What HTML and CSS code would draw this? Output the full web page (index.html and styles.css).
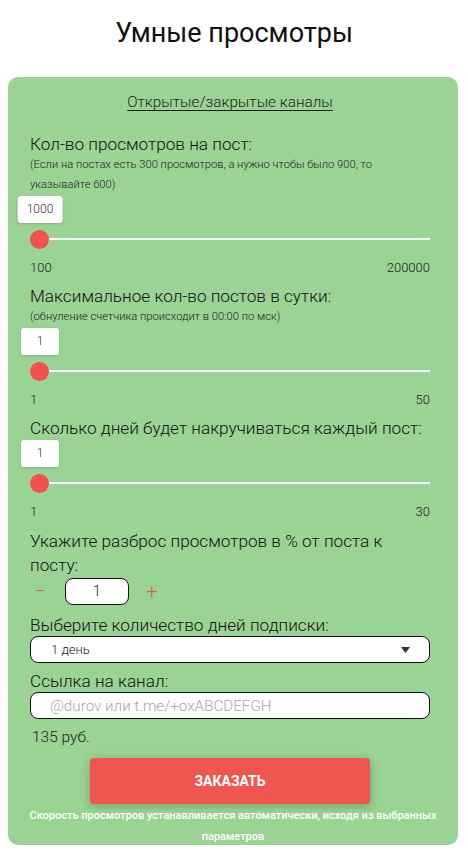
FILE: index.html
```html
<!DOCTYPE html>
<html lang="ru">
<head>
<meta charset="utf-8">
<title>Умные просмотры</title>
<link rel="stylesheet" href="styles.css">
</head>
<body>
<h1 class="title">Умные просмотры</h1>
<div class="card">
  <a class="link" href="#">Открытые/закрытые каналы</a>

  <div class="label first">Кол-во просмотров на пост:</div>
  <div class="hint">(Если на постах есть 300 просмотров, а нужно чтобы было 900, то указывайте 600)</div>
  <div class="slider">
    <div class="bubble">1000</div>
    <div class="track"><span class="thumb"></span><span class="line"></span></div>
  </div>
  <div class="range"><span>100</span><span>200000</span></div>

  <div class="label">Максимальное кол-во постов в сутки:</div>
  <div class="hint">(обнуление счетчика происходит в 00:00 по мск)</div>
  <div class="slider">
    <div class="bubble">1</div>
    <div class="track"><span class="thumb"></span><span class="line"></span></div>
  </div>
  <div class="range"><span>1</span><span>50</span></div>

  <div class="label">Сколько дней будет накручиваться каждый пост:</div>
  <div class="slider">
    <div class="bubble">1</div>
    <div class="track"><span class="thumb"></span><span class="line"></span></div>
  </div>
  <div class="range"><span>1</span><span>30</span></div>

  <div class="label two">Укажите разброс просмотров в % от поста к посту:</div>
  <div class="stepper">
    <span class="sign minus">−</span>
    <div class="num">1</div>
    <span class="sign plus">+</span>
  </div>

  <div class="label l5">Выберите количество дней подписки:</div>
  <div class="select">
    <span>1 день</span>
    <svg class="arrow" width="9" height="6" viewBox="0 0 9 6"><path d="M0 0H9L4.5 6Z" fill="#333"/></svg>
  </div>

  <div class="label l6">Ссылка на канал:</div>
  <input class="field" type="text" placeholder="@durov или t.me/+oxABCDEFGH">

  <div class="price">135 руб.</div>
  <div class="btnrow"><button class="order">ЗАКАЗАТЬ</button></div>
  <p class="foot">Скорость просмотров устанавливается автоматически, исходя из выбранных параметров</p>
</div>
</body>
</html>
```
FILE: styles.css
```css
* { box-sizing: border-box; }
html, body { margin: 0; padding: 0; background: #fff; }
body {
  width: 468px;
  font-family: Roboto, "Noto Sans", sans-serif;
  color: #1b1b1b;
}
.title {
  margin: 0;
  padding-top: 13px;
  height: 77px;
  font-size: 27px;
  line-height: 40px;
  font-weight: 400;
  text-align: center;
  color: #111;
}
.card {
  width: 450px;
  margin-left: 8px;
  background: #9bd394;
  border-radius: 10px;
  padding: 14px 28px 0 22px;
  height: 768px;
}
.link {
  display: block;
  text-align: center;
  font-size: 15.3px;
  line-height: 22px;
  color: #222;
  text-decoration: underline;
  text-underline-offset: 3px;
  text-decoration-thickness: 1px;
  font-weight: 300;
}
.label {
  margin-top: 9px;
  font-size: 17.2px;
  line-height: 22px;
  font-weight: 300;
  color: #111;
}
.label.first { margin-top: 20px; }
.label.two { line-height: 24px; padding-right: 20px; }
.label.l6 { margin-top: 7px; }
.hint {
  font-size: 11.2px;
  line-height: 20px;
  font-weight: 300;
  color: #222;
  padding-right: 40px;
}
.slider {
  position: relative;
  padding-top: 35px;
}
.bubble {
  position: absolute;
  top: 1px;
  left: 10px;
  transform: translateX(-50%);
  min-width: 38px;
  height: 27px;
  padding: 0 9px;
  background: #fff;
  border-radius: 3px;
  box-shadow: 0 1px 3px rgba(0,0,0,0.15);
  font-size: 12px;
  line-height: 27px;
  text-align: center;
  color: #333;
  font-weight: 300;
}
.track {
  display: flex;
  align-items: center;
  height: 18px;
}
.thumb {
  flex: none;
  width: 19px;
  height: 19px;
  border-radius: 50%;
  background: #ef5350;
}
.line {
  flex: 1;
  height: 2px;
  background: #fff;
}
.range {
  display: flex;
  justify-content: space-between;
  margin-top: 12px;
  font-size: 13px;
  line-height: 16px;
  font-weight: 300;
  color: #222;
}
.stepper {
  display: flex;
  align-items: center;
  margin-top: 1px;
  height: 27px;
}
.sign {
  color: #e0584c;
  font-size: 20px;
  font-weight: 300;
  text-align: center;
  line-height: 27px;
}
.sign.minus { width: 20px; margin-right: 15px; }
.sign.plus { width: 20px; margin-left: 13px; }
.num {
  width: 64px;
  height: 27px;
  border: 1px solid #111;
  border-radius: 8px;
  background: #fff;
  text-align: center;
  font-size: 14px;
  line-height: 25px;
  font-weight: 300;
}
.select {
  display: flex;
  align-items: center;
  justify-content: space-between;
  height: 27px;
  border: 1px solid #111;
  border-radius: 8px;
  background: #fff;
  padding: 0 19px 0 20px;
  font-size: 13px;
  font-weight: 300;
  color: #222;
}
.field {
  display: block;
  width: 100%;
  height: 27px;
  border: 1px solid #111;
  border-radius: 8px;
  background: #fff;
  padding: 0 19px;
  font-family: inherit;
  font-size: 15.2px;
  font-weight: 300;
  outline: none;
}
.field::placeholder { color: #a8a8a8; }
.price {
  margin-top: 8px;
  font-size: 15.5px;
  line-height: 20px;
  font-weight: 300;
  padding-left: 2px;
  color: #222;
}
.btnrow {
  display: flex;
  justify-content: center;
  margin-top: 11px;
}
.order {
  width: 280px;
  height: 46px;
  border: none;
  border-radius: 4px;
  background: #ef5650;
  color: #fff;
  font-family: Roboto, sans-serif;
  font-weight: 700;
  font-size: 14px;
  box-shadow: 0 2px 10px rgba(0,0,0,0.25);
}
.foot {
  margin: 1px -28px 0 -22px;
  text-align: center;
  font-size: 11px;
  line-height: 21px;
  font-weight: 500;
  color: #fff;
}
```
